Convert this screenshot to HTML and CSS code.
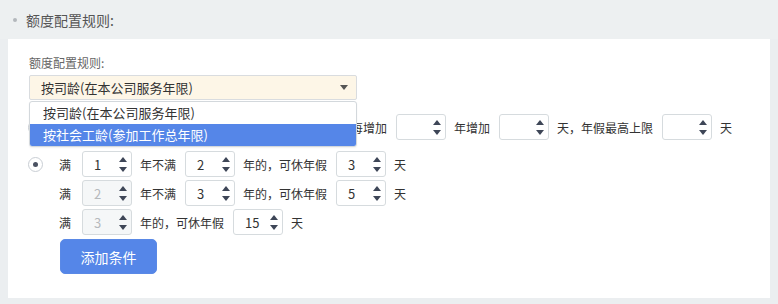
FILE: index.html
```html
<!DOCTYPE html>
<html lang="zh-CN">
<head>
    <meta charset="UTF-8">
    <title>额度配置规则</title>
    <link rel="stylesheet" href="styles.css">
</head>
<body>
    <div class="section-head">
        <span class="dot"></span>
        <span class="section-title">额度配置规则:</span>
    </div>

    <div class="panel">
        <div class="field-label">额度配置规则:</div>
        <div class="select-wrap">
            <div class="select">
                <span>按司龄(在本公司服务年限)</span>
                <span class="caret"></span>
            </div>
            <ul class="options">
                <li>按司龄(在本公司服务年限)</li>
                <li class="active">按社会工龄(参加工作总年限)</li>
            </ul>
        </div>

        <div class="rule-row first">
            <span class="radio"></span>
            <span class="txt lead">满</span>
            <div class="num"><span class="val"></span><span class="spin"><i class="up"></i><i class="down"></i></span></div>
            <span class="txt">年不满</span>
            <div class="num"><span class="val"></span><span class="spin"><i class="up"></i><i class="down"></i></span></div>
            <span class="txt">年后的基础上，工龄每增加</span>
            <div class="num"><span class="val"></span><span class="spin"><i class="up"></i><i class="down"></i></span></div>
            <span class="txt">年增加</span>
            <div class="num"><span class="val"></span><span class="spin"><i class="up"></i><i class="down"></i></span></div>
            <span class="txt">天，年假最高上限</span>
            <div class="num"><span class="val"></span><span class="spin"><i class="up"></i><i class="down"></i></span></div>
            <span class="txt">天</span>
        </div>

        <div class="cond-list">
            <div class="rule-row">
                <span class="radio checked"></span>
                <span class="txt lead">满</span>
                <div class="num"><span class="val">1</span><span class="spin"><i class="up"></i><i class="down"></i></span></div>
                <span class="txt">年不满</span>
                <div class="num"><span class="val">2</span><span class="spin"><i class="up"></i><i class="down"></i></span></div>
                <span class="txt">年的，可休年假</span>
                <div class="num"><span class="val">3</span><span class="spin"><i class="up"></i><i class="down"></i></span></div>
                <span class="txt">天</span>
            </div>
            <div class="rule-row indent">
                <span class="txt lead">满</span>
                <div class="num disabled"><span class="val">2</span><span class="spin"><i class="up"></i><i class="down"></i></span></div>
                <span class="txt">年不满</span>
                <div class="num"><span class="val">3</span><span class="spin"><i class="up"></i><i class="down"></i></span></div>
                <span class="txt">年的，可休年假</span>
                <div class="num"><span class="val">5</span><span class="spin"><i class="up"></i><i class="down"></i></span></div>
                <span class="txt">天</span>
            </div>
            <div class="rule-row indent">
                <span class="txt lead">满</span>
                <div class="num disabled"><span class="val">3</span><span class="spin"><i class="up"></i><i class="down"></i></span></div>
                <span class="txt">年的，可休年假</span>
                <div class="num"><span class="val">15</span><span class="spin"><i class="up"></i><i class="down"></i></span></div>
                <span class="txt">天</span>
            </div>
            <button type="button" class="add-btn">添加条件</button>
        </div>
    </div>
</body>
</html>
```

FILE: styles.css
```css
body {
    margin: 0;
    background-color: #ebeef0;
    font-family: "Noto Sans CJK SC", "Liberation Sans", sans-serif;
    color: #333;
    width: 778px;
    height: 304px;
    overflow: hidden;
}
.section-head {
    height: 39px;
    display: flex;
    align-items: center;
    padding-left: 13px;
    background-color: #edf0f1;
}
.dot {
    width: 4px;
    height: 4px;
    border-radius: 50%;
    background-color: #b3b8bc;
    margin-right: 9px;
}
.section-title {
    font-size: 14px;
    color: #555;
    line-height: 16px;
}
.panel {
    margin: 0 8px;
    height: 259px;
    box-sizing: border-box;
    background-color: #fff;
    padding: 17px 21px 0;
}
.field-label {
    font-size: 12px;
    line-height: 14px;
    color: #666;
    margin-bottom: 5px;
}
.select-wrap {
    position: relative;
    width: 328px;
}
.select {
    height: 25px;
    box-sizing: border-box;
    border: 1px solid #d9dcdf;
    border-radius: 2px;
    background-color: #fdf6e7;
    display: flex;
    align-items: center;
    justify-content: space-between;
    padding: 0 8px 0 11px;
    font-size: 13px;
    color: #333;
}
.caret {
    border-left: 4px solid transparent;
    border-right: 4px solid transparent;
    border-top: 5px solid #555;
}
.options {
    position: absolute;
    top: 26px;
    left: 0;
    right: 0;
    margin: 0;
    padding: 0;
    list-style: none;
    background-color: #fff;
    border: 1px solid #d3d8dc;
    border-radius: 3px;
    overflow: hidden;
    z-index: 5;
    font-size: 13px;
    box-shadow: 0 1px 2px rgba(0,0,0,0.06);
}
.options li {
    height: 22px;
    line-height: 22px;
    padding-left: 13px;
    color: #333;
}
.options li.active {
    background-color: #5586e8;
    color: #fff;
}
.rule-row {
    display: flex;
    align-items: center;
    height: 26px;
    font-size: 12px;
    color: #333;
}
.rule-row.first {
    margin-top: 14px;
}
.rule-row.indent {
    padding-left: 30px;
}
.cond-list {
    margin-top: 11px;
    display: flex;
    flex-direction: column;
    align-items: flex-start;
    gap: 3px;
}
.txt {
    margin-right: 9px;
    white-space: nowrap;
}
.txt.lead {
    margin-right: 11px;
}
.radio {
    width: 15px;
    height: 15px;
    box-sizing: border-box;
    border: 1px solid #c9ced4;
    border-radius: 50%;
    margin: 0 16px 0 -1px;
    display: flex;
    align-items: center;
    justify-content: center;
}
.radio.checked::after {
    content: "";
    width: 5px;
    height: 5px;
    border-radius: 50%;
    background-color: #4b5262;
}
.num {
    width: 50px;
    height: 26px;
    box-sizing: border-box;
    border: 1px solid #d6dbde;
    border-radius: 3px;
    background-color: #fff;
    display: flex;
    align-items: center;
    justify-content: space-between;
    padding: 0 4px 0 11px;
    margin-right: 8px;
    font-size: 13px;
    color: #333;
}
.num.disabled {
    background-color: #f5f7f8;
    color: #b5b9bd;
}
.spin {
    display: flex;
    flex-direction: column;
    gap: 5px;
}
.spin i {
    display: block;
    border-left: 4px solid transparent;
    border-right: 4px solid transparent;
}
.spin .up {
    border-bottom: 5px solid #3e4657;
}
.spin .down {
    border-top: 5px solid #3e4657;
}
.add-btn {
    margin-top: 1px;
    margin-left: 31px;
    width: 97px;
    height: 35px;
    border: 1px solid #5a89e6;
    border-radius: 5px;
    background-color: #5586e8;
    color: #fff;
    font-family: "Noto Sans CJK SC", sans-serif;
    font-size: 14px;
    cursor: pointer;
}
```
